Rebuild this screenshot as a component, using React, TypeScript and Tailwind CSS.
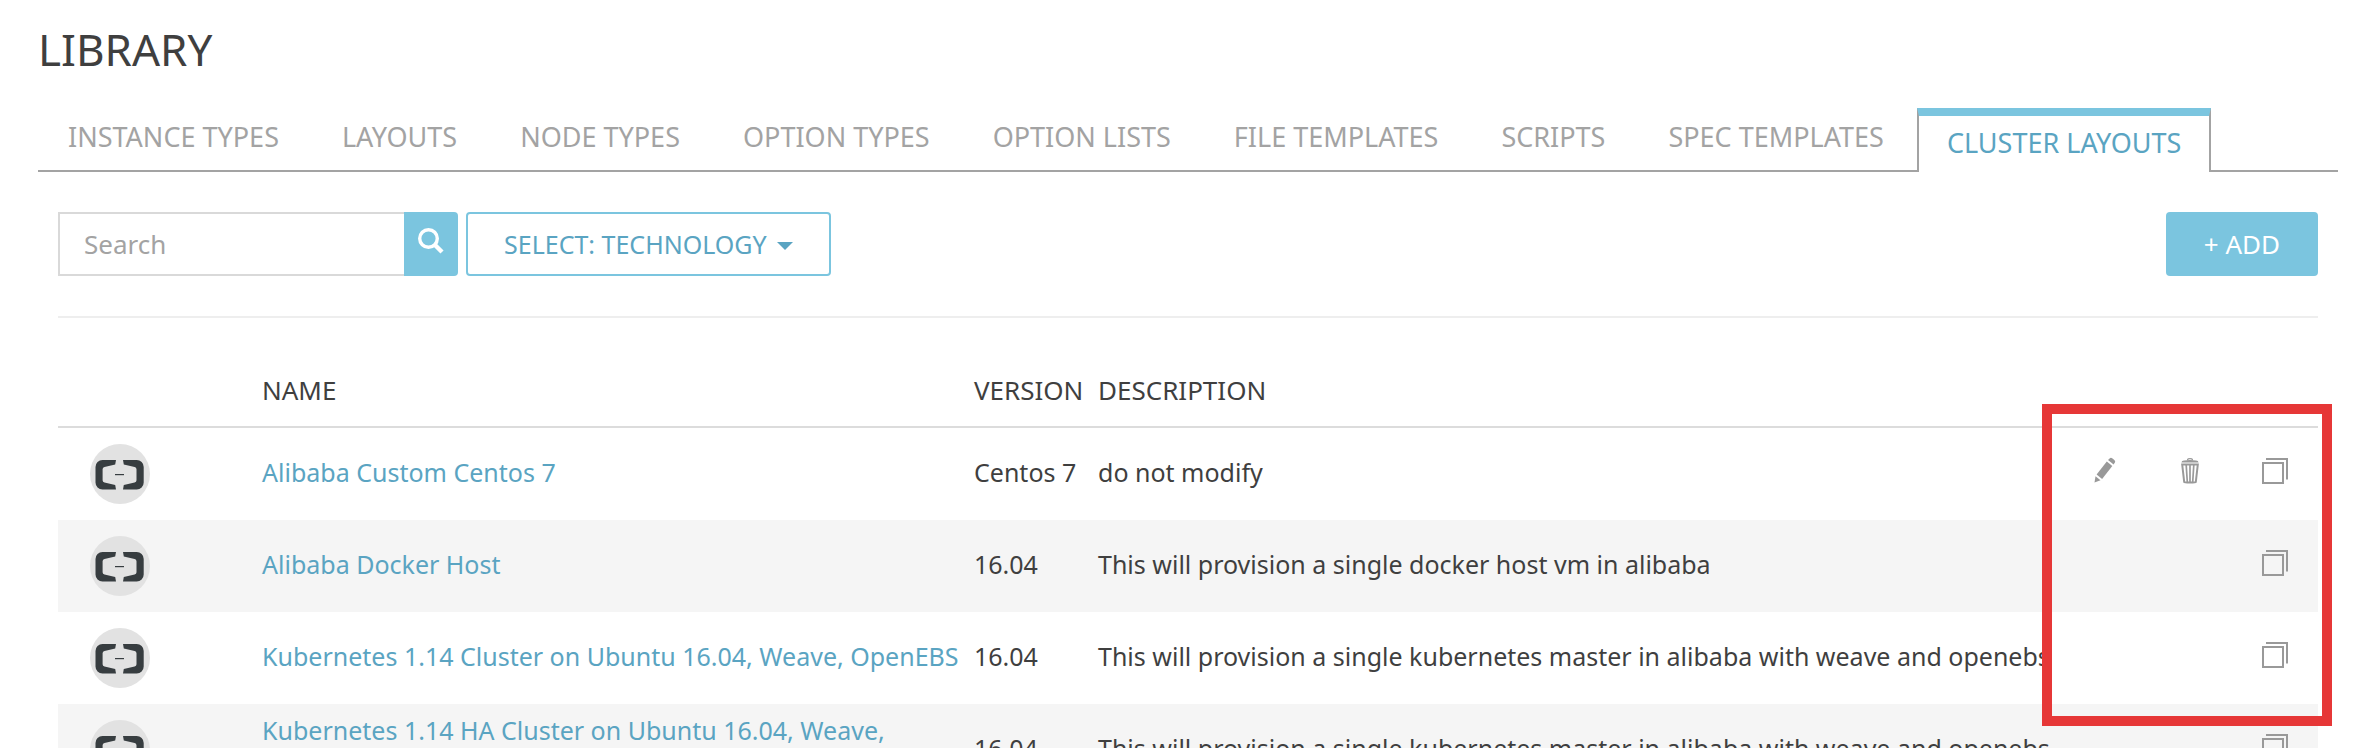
import React from 'react';

const TABS = [
  'Instance Types',
  'Layouts',
  'Node Types',
  'Option Types',
  'Option Lists',
  'File Templates',
  'Scripts',
  'Spec Templates',
  'Cluster Layouts',
];
const ACTIVE_TAB = 'Cluster Layouts';

type Layout = { name: string; version: string; description: string; editable?: boolean };

const LAYOUTS: Layout[] = [
  { name: 'Alibaba Custom Centos 7', version: 'Centos 7', description: 'do not modify', editable: true },
  { name: 'Alibaba Docker Host', version: '16.04', description: 'This will provision a single docker host vm in alibaba' },
  {
    name: 'Kubernetes 1.14 Cluster on Ubuntu 16.04, Weave, OpenEBS',
    version: '16.04',
    description: 'This will provision a single kubernetes master in alibaba with weave and openebs',
  },
  {
    name: 'Kubernetes 1.14 HA Cluster on Ubuntu 16.04, Weave, OpenEBS',
    version: '16.04',
    description: 'This will provision a single kubernetes master in alibaba with weave and openebs',
  },
];

function AlibabaLogo() {
  return (
    <svg viewBox="0 0 60 60" className="block size-[60px]" aria-hidden="true">
      <circle cx="30" cy="30" r="30" fill="#e2e2e2" />
      <g fill="#373d40">
        <path d="M26 16H12.5A7 7 0 0 0 5.5 23V38.500A7 7 0 0 0 12.500 45.500H26L25.200 41L14.500 38.600A2.400 2.400 0 0 1 12.600 36.300V25.300A2.400 2.400 0 0 1 14.500 23L25.200 20.600Z" />
        <path d="M33 16H46.700A7 7 0 0 1 53.700 23V38.500A7 7 0 0 1 46.700 45.500H33L33.800 41L44.600 38.600A2.400 2.400 0 0 0 46.500 36.300V25.300A2.400 2.400 0 0 0 44.600 23L33.800 20.600Z" />
        <rect x="25" y="30" width="9" height="1.200" />
      </g>
    </svg>
  );
}

function SearchIcon() {
  return (
    <svg viewBox="0 0 26 26" className="block size-[26px]" fill="none" stroke="#fff" aria-hidden="true">
      <circle cx="10.500" cy="10.500" r="8.800" strokeWidth="3.400" />
      <path d="M16.500 16.500L24 24" strokeWidth="4.400" />
    </svg>
  );
}

function PencilIcon() {
  return (
    <svg viewBox="0 0 28 28" className="block size-7" fill="currentColor" aria-hidden="true">
      <path d="M3.500 26.500L4.500 20.300L9.500 24.300Z" />
      <path d="M5.600 18.600L15.800 5.600L21.300 9.900L11.100 22.900Z" />
      <path d="M17 4L18.600 2.400Q19.800 1.200 21.500 2.400L23.300 3.900Q24.800 5.200 23.900 6.600L22.600 8.400Z" />
    </svg>
  );
}

function TrashIcon() {
  return (
    <svg viewBox="0 0 28 28" className="block size-7" fill="none" stroke="currentColor" aria-hidden="true">
      <path d="M5.400 6.400Q5.600 4.700 8 4.500Q14 3.600 20 4.500Q22.400 4.700 22.600 6.400Z" fill="currentColor" stroke="none" />
      <path d="M11.700 4.500V3.200Q12 2.600 14 2.600Q16 2.600 16.300 3.200V4.500" strokeWidth="1.300" />
      <path d="M6.200 8.600H21.800L19.800 26Q19.500 26.600 14 26.600Q8.500 26.600 8.200 26Z" strokeWidth="2" />
      <path d="M10.200 9L11.300 26M14 9V26M17.800 9L16.700 26" strokeWidth="1.700" />
    </svg>
  );
}

function CopyIcon() {
  return (
    <svg viewBox="0 0 28 28" className="block size-7" fill="none" stroke="currentColor" strokeWidth="2" aria-hidden="true">
      <rect x="2" y="7" width="20" height="20" />
      <path d="M5 3H26V23.500" />
    </svg>
  );
}

export default function App() {
  return (
    <div className="h-screen overflow-hidden bg-white pr-[26px] pl-[38px] font-['Noto_Sans','Open_Sans',sans-serif] text-[25px] leading-9 text-[#3f3f3f]">
      <h1 className="pt-5 text-[44px] leading-[58px] uppercase">Library</h1>

      <nav className="mt-[30px] flex items-end gap-[3px] border-b-2 border-[#a3a3a3] text-[27px] whitespace-nowrap uppercase">
        {TABS.map((tab) =>
          tab === ACTIVE_TAB ? (
            <a
              key={tab}
              href="#"
              aria-current="page"
              className="-mb-[2px] border-x-2 border-t-8 border-x-[#a3a3a3] border-t-[#7bc5df] bg-white px-[28px] pt-[9px] pb-[11px] text-[#5aa4c2]"
            >
              {tab}
            </a>
          ) : (
            <a key={tab} href="#" className="px-[30px] pb-[15px] text-[#a3a3a3]">
              {tab}
            </a>
          ),
        )}
      </nav>

      <main className="mr-5 ml-5">
        <div className="mt-10 flex h-16 items-stretch">
          <input
            type="search"
            aria-label="Search"
            placeholder="Search"
            className="w-[346px] border-2 border-r-0 border-[#d9d9d9] px-6 text-[26px] outline-none placeholder:text-[#a3a3a3]"
          />
          <button
            type="button"
            aria-label="Run search"
            className="mr-2 flex w-[54px] items-start justify-center rounded-r bg-[#7bc5df] pt-4"
          >
            <SearchIcon />
          </button>
          <button
            type="button"
            className="flex items-center gap-[10px] rounded border-2 border-[#7bc5df] px-9 text-[#5aa4c2] uppercase"
          >
            Select: Technology
            <svg viewBox="0 0 16 8" className="mt-1 h-2 w-4" fill="currentColor" aria-hidden="true">
              <path d="M0 0H16L8 8Z" />
            </svg>
          </button>
          <button type="button" className="ml-auto rounded bg-[#7bc5df] px-[38px] text-[26px] text-white uppercase">
            + Add
          </button>
        </div>

        <hr className="mt-10 border-t-2 border-[#eeeeee]" />

        <div className="relative mt-9">
          <table className="w-full table-fixed border-separate border-spacing-0 text-left">
            <colgroup>
              <col className="w-[204px]" />
              <col className="w-[712px]" />
              <col className="w-[124px]" />
              <col />
              <col className="w-[286px]" />
            </colgroup>
            <thead>
              <tr className="h-[74px] text-[26px] uppercase *:border-b-2 *:border-[#dcdcdc] *:p-0 *:font-normal">
                <th aria-label="Icon" />
                <th>Name</th>
                <th>Version</th>
                <th>Description</th>
                <th aria-label="Actions" />
              </tr>
            </thead>
            <tbody>
              {LAYOUTS.map((row) => (
                <tr key={row.name} className="h-[92px] even:bg-[#f5f5f5]">
                  <td className="p-0 pl-8">
                    <AlibabaLogo />
                  </td>
                  <td className="p-0 pb-1">
                    <a href="#" className="text-[#5aa4c2]">
                      {row.name}
                    </a>
                  </td>
                  <td className="p-0 pb-1 whitespace-nowrap">{row.version}</td>
                  <td className="p-0 pb-1 whitespace-nowrap">{row.description}</td>
                  <td className="p-0 pr-[29px] pb-2">
                    <div className="flex justify-end gap-[57px] text-[#999999]">
                      {row.editable && (
                        <>
                          <button type="button" aria-label={`Edit ${row.name}`}>
                            <PencilIcon />
                          </button>
                          <button type="button" aria-label={`Delete ${row.name}`}>
                            <TrashIcon />
                          </button>
                        </>
                      )}
                      <button type="button" aria-label={`Duplicate ${row.name}`}>
                        <CopyIcon />
                      </button>
                    </div>
                  </td>
                </tr>
              ))}
            </tbody>
          </table>

          <div className="pointer-events-none absolute top-[50px] -right-[14px] h-[322px] w-[290px] border-10 border-[#e63737]" />
        </div>
      </main>
    </div>
  );
}
